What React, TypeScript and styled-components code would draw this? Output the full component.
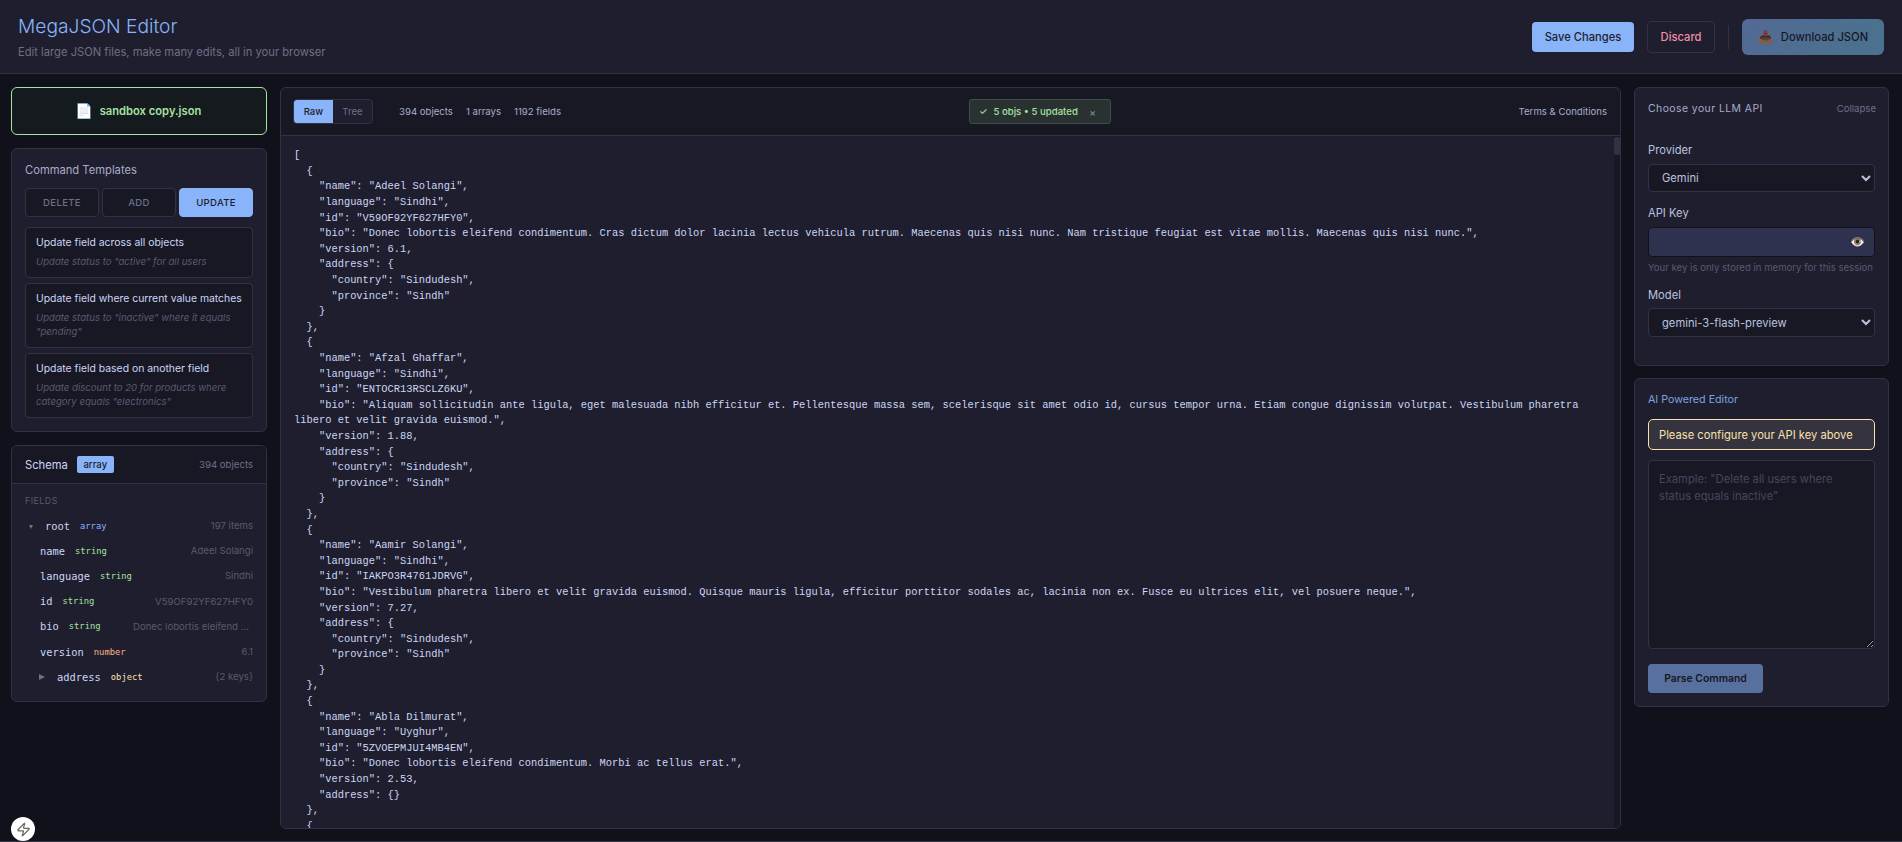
import React from "react";
import styled, { createGlobalStyle } from "styled-components";
import { Zap } from "lucide-react";

const Global = createGlobalStyle`
  html, body { margin: 0; padding: 0; background: #11111b; }
  * { box-sizing: border-box; }
  body { font-family: Inter, "Liberation Sans", sans-serif; color: #cdd6f4; overflow: hidden; }
  textarea::placeholder { color: #45475a; opacity: 1; }
`;

const Page = styled.div`
  width: 1902px; height: 842px; display: flex; flex-direction: column; background: #11111b; overflow: hidden; position: relative;
`;
const Header = styled.header`
  height: 74px; flex: none; display: flex; align-items: center; justify-content: space-between;
  padding: 0 18px; background: #1e1e2e; border-bottom: 1px solid #313244;
`;
const Brand = styled.div`display: flex; flex-direction: column; gap: 7px;`;
const Title = styled.h1`margin: 0; font-size: 19.2px; line-height: 24px; font-weight: 300; color: #89b4fa;`;
const Subtitle = styled.p`margin: 0; font-size: 11.2px; line-height: 14px; color: #6c7086;`;
const Actions = styled.div`display: flex; align-items: center; gap: 13px;`;
const SaveButton = styled.button`
  width: 102px; height: 30px; border: 0; border-radius: 4px; background: #89b4fa; color: #1e1e2e;
  font: 500 11.2px Inter, sans-serif; padding: 0;
`;
const DiscardButton = styled.button`
  width: 68px; height: 32px; border: 1px solid #313244; border-radius: 4px; background: transparent; color: #f38ba8;
  font: 500 11.2px Inter, sans-serif; padding: 0;
`;
const Divider = styled.span`width: 1px; height: 24px; background: #313244;`;
const DownloadButton = styled.button`
  width: 142px; height: 36px; border: 0; border-radius: 6px; background: linear-gradient(135deg, #89b4fa, #74c7ec);
  opacity: .5; color: #11111b; font: 500 11.2px Inter, sans-serif; padding: 0;
  display: flex; align-items: center; justify-content: center; gap: 8px;
`;
const DownloadEmoji = styled.span`font-size: 12px;`;
const Main = styled.main`
  flex: 1; min-height: 0; display: grid; grid-template-columns: 256px 1341px 255px; gap: 13px; padding: 13px 13px 13px 11px;
`;
const Column = styled.div`display: flex; flex-direction: column; gap: 13px; min-height: 0;`;
const FileBox = styled.div`
  height: 48px; border: 1px solid #a6e3a1; border-radius: 6px; background: #151a1e; display: flex; align-items: center;
  justify-content: center; gap: 7px; color: #a6e3a1; font-size: 11.2px; font-weight: 600; padding-right: 2px;
`;
const FileEmoji = styled.span`font-size: 14.4px;`;
const Panel = styled.section`
  background: #1e1e2e; border: 1px solid #313244; border-radius: 6px;
`;
const TemplatePanel = styled(Panel)`padding: 13px; height: 284px;`;
const PanelTitle = styled.h3`margin: 0 0 10px; font-size: 11.2px; line-height: 16px; font-weight: 400; color: #a6adc8;`;
const Tabs = styled.div`display: grid; grid-template-columns: repeat(3, 74px); gap: 3px; margin-bottom: 10px;`;
const Tab = styled.button<{ $active?: boolean }>`
  height: 29px; padding: 0; border-radius: 4px; border: 1px solid ${p => (p.$active ? "#89b4fa" : "#313244")};
  background: ${p => (p.$active ? "#89b4fa" : "#181825")}; color: ${p => (p.$active ? "#1e1e2e" : "#6c7086")};
  font: 500 9.6px Inter, sans-serif; letter-spacing: .3px;
`;
const TemplateList = styled.div`display: flex; flex-direction: column; gap: 5px;`;
const TemplateItem = styled.div`
  padding: 8px 10px; border: 1px solid #313244; border-radius: 4px; background: #181825;
`;
const TemplateName = styled.div`font-size: 10.4px; line-height: 14px; color: #cdd6f4; margin-bottom: 5px;`;
const TemplateDesc = styled.div`font-size: 9.6px; line-height: 14px; font-style: italic; color: #585b70;`;

const SchemaPanel = styled(Panel)`overflow: hidden; height: 257px;`;
const SchemaHead = styled.div`
  height: 38px; background: #181825; border-bottom: 1px solid #313244; padding: 0 13px;
  display: flex; align-items: center;
`;
const SchemaTitle = styled.span`font-size: 11.2px; color: #cdd6f4;`;
const SchemaBadge = styled.span`
  margin-left: 9px; height: 17px; width: 37px; border-radius: 2px; background: #89b4fa; color: #1e1e2e;
  font: 500 9.6px Inter, sans-serif; display: flex; align-items: center; justify-content: center;
`;
const SchemaCount = styled.span`margin-left: auto; font-size: 9.6px; color: #6c7086;`;
const SchemaBody = styled.div`padding: 11px 13px 0;`;
const FieldsLabel = styled.div`font-size: 8.8px; line-height: 12px; letter-spacing: .5px; color: #585b70; margin-bottom: 6px;`;
const Row = styled.div<{ $indent: number }>`
  height: 25.2px; display: flex; align-items: center; padding-left: ${p => p.$indent}px;
`;
const Caret = styled.span<{ $small?: boolean }>`
  width: 0; height: 0; flex: none;
  ${p => p.$small
    ? "border-left: 2.5px solid transparent; border-right: 2.5px solid transparent; border-top: 4px solid #6c7086; margin: 2px 12px 0 2px;"
    : "border-top: 3.5px solid transparent; border-bottom: 3.5px solid transparent; border-left: 6px solid #6c7086; margin: 1px 12px 0 0;"}
`;
const FieldName = styled.span`font: 10.4px "DejaVu Sans Mono", monospace; color: #cdd6f4;`;
const FieldType = styled.span<{ $color: string }>`
  font: 8.8px "DejaVu Sans Mono", monospace; color: ${p => p.$color}; margin-left: 10px;
`;
const FieldValue = styled.span<{ $inset?: boolean }>`
  margin-left: auto; font-size: 9.6px; color: #585b70; white-space: nowrap;
  ${p => (p.$inset ? "margin-right: 4px;" : "")}
`;

const Editor = styled.section`
  background: #181825; border: 1px solid #313244; border-radius: 6px; overflow: hidden; display: flex; flex-direction: column; min-height: 0;
`;
const Toolbar = styled.div`
  height: 48px; flex: none; border-bottom: 1px solid #313244; position: relative; display: flex; align-items: center; padding: 0 13px 0 12px;
`;
const Toggle = styled.div`
  display: flex; height: 25px; width: 80px; border: 1px solid #313244; border-radius: 4px; overflow: hidden; background: #1e1e2e;
`;
const ToggleBtn = styled.button<{ $active?: boolean }>`
  flex: 1; border: 0; padding: 0; background: ${p => (p.$active ? "#89b4fa" : "transparent")};
  color: ${p => (p.$active ? "#1e1e2e" : "#6c7086")}; font: ${p => (p.$active ? 500 : 400)} 9.6px Inter, sans-serif;
`;
const Stats = styled.div`display: flex; gap: 13px; margin-left: 26px; font-size: 9.6px; color: #a6adc8;`;
const Status = styled.div`
  position: absolute; left: 688px; top: 11px; width: 142px; height: 25px; border: 1px solid #3e5049; border-radius: 3px; background: #2a3231;
  display: flex; align-items: center; padding: 0 14px 0 9px; color: #a6e3a1; font-size: 9.6px; font-weight: 500;
`;
const StatusText = styled.span`margin-left: 6px; flex: 1;`;
const StatusClose = styled.span`color: #7f8a8a; font-size: 10px;`;
const Terms = styled.span`margin-left: auto; font-size: 9.6px; color: #a6adc8;`;
const CodeRow = styled.div`flex: 1; min-height: 0; display: flex; background: #1e1e2e;`;
const Code = styled.pre`
  flex: 1; min-width: 0; margin: 0; padding: 12.3px 14px 0 13px; overflow: hidden; white-space: pre-wrap; word-break: break-word;
  font: 10.4px/15.6px "Liberation Mono", monospace; color: #cdd6f4;
`;
const ScrollTrack = styled.div`width: 6px; flex: none; background: #181825;`;
const ScrollThumb = styled.div`height: 18px; margin-top: 1px; background: #313244; border-radius: 2px;`;

const RightCol = styled(Column)`gap: 12px;`;
const ApiPanel = styled(Panel)`height: 279px; padding: 13px;`;
const ApiHead = styled.div`
  display: flex; justify-content: space-between; align-items: center; height: 14px; margin: 0 0 28px;
`;
const ApiTitle = styled.span`font-size: 10.4px; letter-spacing: .45px; color: #a6adc8;`;
const Collapse = styled.span`font-size: 9.6px; color: #6c7086; margin-right: -1px;`;
const Field = styled.label`display: block; margin-bottom: 14px;`;
const FieldLabel = styled.span<{ $tight?: boolean }>`
  display: block; font-size: 11.2px; line-height: 14px; color: #bac2de; margin-bottom: ${p => (p.$tight ? 6 : 7)}px;
`;
const Select = styled.select<{ $tall?: boolean }>`
  display: block; width: 100%; height: ${p => (p.$tall ? 29 : 28)}px; padding: 0 9px; background: #181825; border: 1px solid #313244; border-radius: 4px;
  color: #bac2de; font: 11.2px Inter, sans-serif; appearance: auto; color-scheme: dark;
`;
const KeyWrap = styled.div`position: relative;`;
const KeyInput = styled.input`
  display: block; width: 100%; height: 30px; background: #2e324e; border: 1px solid #11111b; border-radius: 4px;
`;
const Eye = styled.span`position: absolute; right: 10px; top: 7px; font-size: 12px; line-height: 16px;`;
const Hint = styled.div`margin: 5px 0 2px; font-size: 9.6px; line-height: 12px; color: #585b70; white-space: nowrap;`;
const AiPanel = styled(Panel)`height: 329px; padding: 13px;`;
const AiTitle = styled.h3`margin: 0 0 11px; font-size: 10.7px; line-height: 16px; font-weight: 400; color: #7ba4e0;`;
const Warn = styled.div`
  height: 31px; border: 1px solid #f9e2af; border-radius: 5px; background: #35333d; color: #f9e2af;
  font-size: 11.2px; display: flex; align-items: center; padding-left: 10px; margin-bottom: 10px;
`;
const Prompt = styled.textarea`
  display: block; width: 100%; height: 189px; padding: 10px; background: #181825; border: 1px solid #313244; border-radius: 4px;
  font: 11.2px/17px Inter, sans-serif; color: #cdd6f4; margin-bottom: 15px; outline: none;
`;
const ParseButton = styled.button`
  width: 115px; height: 29px; border: 0; border-radius: 4px; background: #89b4fa; opacity: .55; padding: 0;
  color: #11111b; font: 600 10.4px Inter, sans-serif;
`;
const DevBadge = styled.div`
  position: absolute; left: 11px; top: 817px; width: 24px; height: 24px; border-radius: 50%; background: #fff; color: #666;
  display: flex; align-items: center; justify-content: center;
`;
const Footer = styled.div`position: absolute; left: 0; right: 0; bottom: 0; height: 1px; background: #313244;`;

const json = `[
  {
    "name": "Adeel Solangi",
    "language": "Sindhi",
    "id": "V59OF92YF627HFY0",
    "bio": "Donec lobortis eleifend condimentum. Cras dictum dolor lacinia lectus vehicula rutrum. Maecenas quis nisi nunc. Nam tristique feugiat est vitae mollis. Maecenas quis nisi nunc.",
    "version": 6.1,
    "address": {
      "country": "Sindudesh",
      "province": "Sindh"
    }
  },
  {
    "name": "Afzal Ghaffar",
    "language": "Sindhi",
    "id": "ENTOCR13RSCLZ6KU",
    "bio": "Aliquam sollicitudin ante ligula, eget malesuada nibh efficitur et. Pellentesque massa sem, scelerisque sit amet odio id, cursus tempor urna. Etiam congue dignissim volutpat. Vestibulum pharetra libero et velit gravida euismod.",
    "version": 1.88,
    "address": {
      "country": "Sindudesh",
      "province": "Sindh"
    }
  },
  {
    "name": "Aamir Solangi",
    "language": "Sindhi",
    "id": "IAKPO3R4761JDRVG",
    "bio": "Vestibulum pharetra libero et velit gravida euismod. Quisque mauris ligula, efficitur porttitor sodales ac, lacinia non ex. Fusce eu ultrices elit, vel posuere neque.",
    "version": 7.27,
    "address": {
      "country": "Sindudesh",
      "province": "Sindh"
    }
  },
  {
    "name": "Abla Dilmurat",
    "language": "Uyghur",
    "id": "5ZVOEPMJUI4MB4EN",
    "bio": "Donec lobortis eleifend condimentum. Morbi ac tellus erat.",
    "version": 2.53,
    "address": {}
  },
  {`;

const templates = [
  ["Update field across all objects", 'Update status to "active" for all users'],
  ["Update field where current value matches", 'Update status to "inactive" where it equals "pending"'],
  ["Update field based on another field", 'Update discount to 20 for products where category equals "electronics"'],
];

const fields = [
  { name: "name", type: "string", color: "#a6e3a1", value: "Adeel Solangi" },
  { name: "language", type: "string", color: "#a6e3a1", value: "Sindhi" },
  { name: "id", type: "string", color: "#a6e3a1", value: "V59OF92YF627HFY0" },
  { name: "bio", type: "string", color: "#a6e3a1", value: "Donec lobortis eleifend ...", inset: true },
  { name: "version", type: "number", color: "#fab387", value: "6.1" },
];

export default function App() {
  return (
    <Page>
      <Global />
      <Header>
        <Brand>
          <Title>MegaJSON Editor</Title>
          <Subtitle>Edit large JSON files, make many edits, all in your browser</Subtitle>
        </Brand>
        <Actions>
          <SaveButton>Save Changes</SaveButton>
          <DiscardButton>Discard</DiscardButton>
          <Divider />
          <DownloadButton><DownloadEmoji>📥</DownloadEmoji>Download JSON</DownloadButton>
        </Actions>
      </Header>
      <Main>
        <Column>
          <FileBox><FileEmoji>📄</FileEmoji>sandbox copy.json</FileBox>
          <TemplatePanel>
            <PanelTitle>Command Templates</PanelTitle>
            <Tabs>
              <Tab>DELETE</Tab>
              <Tab>ADD</Tab>
              <Tab $active>UPDATE</Tab>
            </Tabs>
            <TemplateList>
              {templates.map(([n, d]) => (
                <TemplateItem key={n}>
                  <TemplateName>{n}</TemplateName>
                  <TemplateDesc>{d}</TemplateDesc>
                </TemplateItem>
              ))}
            </TemplateList>
          </TemplatePanel>
          <SchemaPanel>
            <SchemaHead>
              <SchemaTitle>Schema</SchemaTitle>
              <SchemaBadge>array</SchemaBadge>
              <SchemaCount>394 objects</SchemaCount>
            </SchemaHead>
            <SchemaBody>
              <FieldsLabel>FIELDS</FieldsLabel>
              <Row $indent={2}>
                <Caret $small />
                <FieldName>root</FieldName>
                <FieldType $color="#89b4fa">array</FieldType>
                <FieldValue>197 items</FieldValue>
              </Row>
              {fields.map(f => (
                <Row $indent={15} key={f.name}>
                  <FieldName>{f.name}</FieldName>
                  <FieldType $color={f.color}>{f.type}</FieldType>
                  <FieldValue $inset={f.inset}>{f.value}</FieldValue>
                </Row>
              ))}
              <Row $indent={14}>
                <Caret />
                <FieldName>address</FieldName>
                <FieldType $color="#f9e2af">object</FieldType>
                <FieldValue>{"{2 keys}"}</FieldValue>
              </Row>
            </SchemaBody>
          </SchemaPanel>
        </Column>
        <Editor>
          <Toolbar>
            <Toggle>
              <ToggleBtn $active>Raw</ToggleBtn>
              <ToggleBtn>Tree</ToggleBtn>
            </Toggle>
            <Stats>
              <span>394 objects</span>
              <span>1 arrays</span>
              <span>1192 fields</span>
            </Stats>
            <Status>
              <span>✓</span>
              <StatusText>5 objs • 5 updated</StatusText>
              <StatusClose>×</StatusClose>
            </Status>
            <Terms>Terms &amp; Conditions</Terms>
          </Toolbar>
          <CodeRow>
            <Code>{json}</Code>
            <ScrollTrack><ScrollThumb /></ScrollTrack>
          </CodeRow>
        </Editor>
        <RightCol>
          <ApiPanel>
            <ApiHead>
              <ApiTitle>Choose your LLM API</ApiTitle>
              <Collapse>Collapse</Collapse>
            </ApiHead>
            <Field>
              <FieldLabel>Provider</FieldLabel>
              <Select defaultValue="Gemini"><option>Gemini</option></Select>
            </Field>
            <Field>
              <FieldLabel>API Key</FieldLabel>
              <KeyWrap>
                <KeyInput type="password" />
                <Eye>👁️</Eye>
              </KeyWrap>
              <Hint>Your key is only stored in memory for this session</Hint>
            </Field>
            <Field>
              <FieldLabel $tight>Model</FieldLabel>
              <Select $tall defaultValue="gemini-3-flash-preview"><option>gemini-3-flash-preview</option></Select>
            </Field>
          </ApiPanel>
          <AiPanel>
            <AiTitle>AI Powered Editor</AiTitle>
            <Warn>Please configure your API key above</Warn>
            <Prompt placeholder={'Example: "Delete all users where status equals inactive"'} />
            <ParseButton>Parse Command</ParseButton>
          </AiPanel>
        </RightCol>
      </Main>
      <Footer />
      <DevBadge><Zap size={15} strokeWidth={2} /></DevBadge>
    </Page>
  );
}
